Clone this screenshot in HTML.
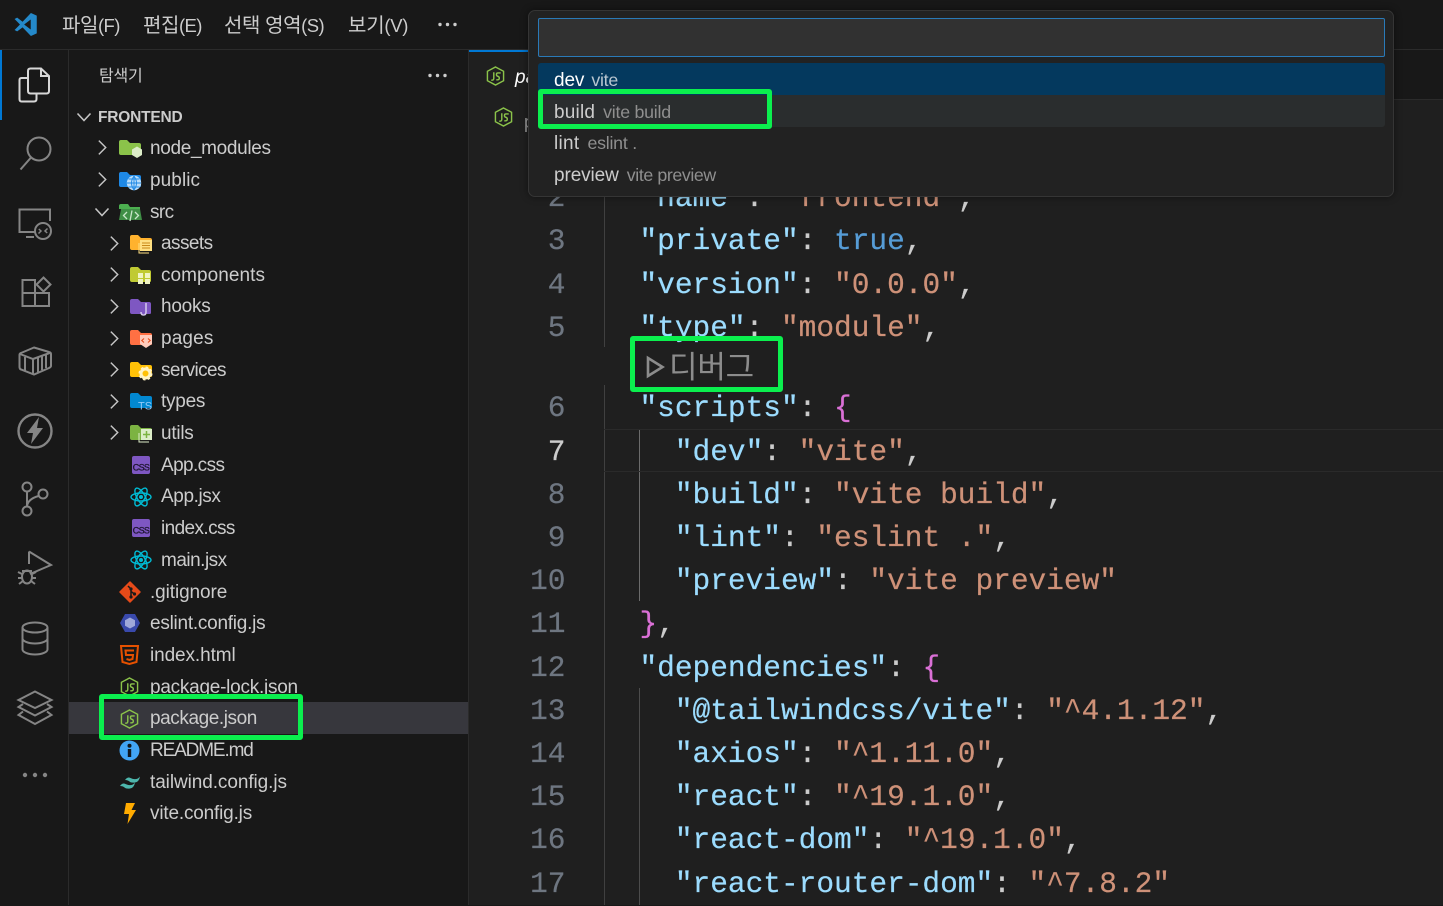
<!DOCTYPE html>
<html lang="ko"><head><meta charset="utf-8"><title>VS Code</title>
<style>
*{box-sizing:border-box}
html,body{margin:0;padding:0;background:#181818}
body{width:1443px;height:905px;position:relative;overflow:hidden;font-family:"Liberation Sans","Noto Sans CJK KR",sans-serif;color:#ccc}
.a{position:absolute}
.m{position:absolute;top:11px;height:30px;line-height:30px;font-size:20px;color:#ccc;white-space:nowrap;letter-spacing:-.4px}
.m small{font-size:18.500px;letter-spacing:-.6px}
.t{position:absolute;height:32px;line-height:30px;font-size:19px;color:#ccc;white-space:nowrap;letter-spacing:-.25px}
.c{position:absolute;height:44px;line-height:44px;font-family:"Liberation Mono",monospace;font-size:29.5px;white-space:pre;color:#ccc;letter-spacing:-.02px;-webkit-text-stroke:.2px}
.n{position:absolute;left:499.500px;width:66px;text-align:right;height:44px;line-height:44px;font-family:"Liberation Mono",monospace;font-size:29.5px;color:#6e7681;-webkit-text-stroke:.2px}
.k{color:#9cdcfe}.s{color:#ce9178}.b{color:#569cd6}.p{color:#da70d6}
.q{position:absolute;left:554px;height:32px;line-height:32px;font-size:19px;white-space:nowrap;color:#ccc;letter-spacing:-.1px}
.q i{font-style:normal;font-size:17.800px;color:#8f8f8f;margin-left:8px;letter-spacing:-.25px}
.g{position:absolute;border:5px solid #0bef4e;border-radius:3px}
svg{position:absolute;overflow:visible}
.ab{fill:none;stroke:#858585;stroke-width:2}
.ch{fill:none;stroke:#c5c5c5;stroke-width:1.6}
</style></head><body>

<svg width="0" height="0" style="position:absolute">
<defs>
<symbol id="js" viewBox="0 0 20 20" overflow="visible"><path d="M10 .5 18.500 5V15L10 19.500 1.500 15V5Z" fill="none" stroke="#8bc34a" stroke-width="1.500"/><path d="M8.200 6V12.500Q8.200 14.800 5.500 14.300M15.500 6.800H12.500Q11 6.800 11 8.400T12.500 10.300 14 12.200 12.500 14H10.800" fill="none" stroke="#8bc34a" stroke-width="1.500"/></symbol>
<symbol id="chr" viewBox="0 0 12 18" overflow="visible"><path class="ch" d="M2 1.500 9.500 9 2 16.500"/></symbol>
<symbol id="css" viewBox="0 0 20 20" overflow="visible"><rect x="1" y="1" width="18" height="18" rx="2" fill="#7e57c2"/><text x="10" y="15.500" text-anchor="middle" font-family="Liberation Sans" font-size="9" fill="#1e1530" stroke="#1e1530" stroke-width=".3" letter-spacing="-.7">CSS</text></symbol>
<symbol id="react" viewBox="0 0 22 22" overflow="visible"><g fill="none" stroke="#00bcd4" stroke-width="1.400"><ellipse cx="11" cy="11" rx="10" ry="4"/><ellipse cx="11" cy="11" rx="10" ry="4" transform="rotate(60 11 11)"/><ellipse cx="11" cy="11" rx="10" ry="4" transform="rotate(120 11 11)"/></g><circle cx="11" cy="11" r="2" fill="#00bcd4"/></symbol>
</defs>
</svg>

<!-- backgrounds -->
<div class="a" style="left:0;top:0;width:1443px;height:49px;background:#181818"></div>
<div class="a" style="left:0;top:49px;width:1443px;height:1px;background:#2b2b2b"></div>
<div class="a" style="left:0;top:50px;width:68px;height:855px;background:#181818"></div>
<div class="a" style="left:68px;top:50px;width:1px;height:855px;background:#2b2b2b"></div>
<div class="a" style="left:69px;top:50px;width:399px;height:855px;background:#181818"></div>
<div class="a" style="left:468px;top:50px;width:1px;height:855px;background:#2b2b2b"></div>
<div class="a" style="left:469px;top:50px;width:974px;height:855px;background:#1f1f1f"></div>
<div class="a" style="left:700px;top:50px;width:743px;height:49px;background:#181818"></div>
<div class="a" style="left:700px;top:99px;width:743px;height:1px;background:#2b2b2b"></div>
<div class="a" style="left:469px;top:50px;width:70px;height:2px;background:#0078d4"></div>
<div class="a" style="left:0;top:50px;width:2px;height:70px;background:#0078d4"></div>

<!-- title bar -->
<svg style="left:13px;top:12px" width="25" height="25" viewBox="0 0 24 24"><path fill="#2489ca" fill-rule="evenodd" d="M17.200 1 9.200 9.300 4 5.400 1.500 6.700 6.700 12 1.500 17.300 4 18.600 9.200 14.700 17.200 23 22.800 20.500V3.500ZM17 7.200V16.800L10.700 12Z"/></svg>
<div class="m" style="left:62px">파일<small>(F)</small></div>
<div class="m" style="left:143px">편집<small>(E)</small></div>
<div class="m" style="left:224px">선택 영역<small>(S)</small></div>
<div class="m" style="left:348px;letter-spacing:-.2px">보기<small style="letter-spacing:-.3px">(V)</small></div>
<svg style="left:438px;top:22px" width="20" height="5"><circle cx="2" cy="2.500" r="1.700" fill="#ccc"/><circle cx="9.500" cy="2.500" r="1.700" fill="#ccc"/><circle cx="17" cy="2.500" r="1.700" fill="#ccc"/></svg>

<!-- activity bar -->
<svg style="left:18px;top:67px" width="33" height="36" viewBox="0 0 33 36" fill="none" stroke="#d7d7d7" stroke-width="2"><path d="M10 4 Q10 1.500 12.500 1.500H23L31 9V24Q31 26.500 28.500 26.500H12.500Q10 26.500 10 24Z"/><path d="M23 1.500V9H31"/><path d="M10 11H3.500Q1.500 11 1.500 13V32Q1.500 34.500 3.500 34.500H16Q18.500 34.500 18.500 32V26.500"/></svg>
<svg class="ab" style="left:19px;top:136px" width="33" height="35" viewBox="0 0 33 35"><circle cx="20" cy="13" r="11.500"/><path d="M12 21.500 1.500 33.500"/></svg>
<svg class="ab" style="left:18px;top:208px" width="35" height="33" viewBox="0 0 35 33"><path d="M18 24H1.500V1.500H32V13"/><path d="M8 29H16"/><circle cx="25" cy="23" r="8"/><path d="M20.500 25.500 23 23 20.800 21M29.500 20.500 27 23 29.200 25" stroke-width="1.500"/></svg>
<svg class="ab" style="left:21px;top:276px" width="31" height="32" viewBox="0 0 31 32"><path d="M1.500 4H14V30H1.500ZM1.500 17H28V30H14"/><path d="M22.500 1.500 29.500 8.500 22.500 15.500 15.500 8.500Z"/></svg>
<svg class="ab" style="left:18px;top:346px" width="34" height="30" viewBox="0 0 34 30"><path d="M16 1.500 31 6Q33 6.500 33 8V20Q33 21 31 22L16 28.500 3 23.500Q1.500 23 1.500 21V9Q1.500 7.500 3 7Z"/><path d="M2 8 15 13 33 6.500M15 13V28M7 11V25M20 12V26M24 10.500V24M28 9V22"/></svg>
<svg class="ab" style="left:17px;top:413px" width="36" height="36" viewBox="0 0 36 36"><circle cx="18" cy="18" r="16.500" stroke-width="2.400"/><path d="M22 4 10 20H16L14 31 26 15H20Z" fill="#858585" stroke="none"/></svg>
<svg class="ab" style="left:21px;top:481px" width="28" height="36" viewBox="0 0 28 36" stroke-width="2.200"><circle cx="6" cy="6" r="4.500"/><circle cx="6" cy="30" r="4.500"/><circle cx="22" cy="13" r="4.500"/><path d="M6 10.500V25.500M6 25Q7 18 17.500 15"/></svg>
<svg class="ab" style="left:17px;top:550px" width="36" height="36" viewBox="0 0 36 36"><path d="M12 1.500 34 15 13 24"/><path d="M12 1.500V14"/><ellipse cx="10" cy="27" rx="5" ry="6.500" fill="none"/><path d="M1 22 5 24M1 28H5M2 34 6 31M19 22 15 24M19 28H15M18 34 14 31M5 21H15"/></svg>
<svg class="ab" style="left:21px;top:621px" width="28" height="35" viewBox="0 0 28 35"><ellipse cx="14" cy="6.500" rx="12.500" ry="5"/><path d="M1.500 6.500V28.500C1.500 31 7 33.500 14 33.500S26.500 31 26.500 28.500V6.500M1.500 17.500C1.500 20 7 22.500 14 22.500S26.500 20 26.500 17.500"/></svg>
<svg class="ab" style="left:17px;top:690px" width="36" height="36" viewBox="0 0 36 36"><path d="M18 1.500 34.500 10 18 18 1.500 10Z"/><path d="M6 14 1.500 17 18 25.500 34.500 17 30 14"/><path d="M6 21.500 1.500 25 18 34 34.500 25 30 21.500"/></svg>
<svg style="left:22px;top:772px" width="26" height="6"><circle cx="3" cy="3" r="2.200" fill="#858585"/><circle cx="13" cy="3" r="2.200" fill="#858585"/><circle cx="23" cy="3" r="2.200" fill="#858585"/></svg>

<!-- sidebar header -->
<div class="a" style="left:99px;top:64.500px;height:24px;line-height:24px;font-size:16px;color:#ccc;letter-spacing:-.2px">탐색기</div>
<svg style="left:428px;top:73px" width="19" height="5"><circle cx="2" cy="2.500" r="1.700" fill="#ccc"/><circle cx="9.500" cy="2.500" r="1.700" fill="#ccc"/><circle cx="17" cy="2.500" r="1.700" fill="#ccc"/></svg>
<svg style="left:76px;top:112px" width="16" height="10" viewBox="0 0 16 10"><path class="ch" d="M1.500 1.500 8 8.500 14.500 1.500"/></svg>
<div class="a" style="left:98px;top:108px;height:20px;line-height:20px;font-size:15.500px;font-weight:700;color:#ccc;letter-spacing:-.2px">FRONTEND</div>

<!-- selected row -->
<div class="a" style="left:69px;top:702px;width:399px;height:32px;background:#37373d"></div>

<!-- chevrons -->
<svg style="left:97px;top:139px" width="11" height="17"><use href="#chr"/></svg>
<svg style="left:97px;top:171px" width="11" height="17"><use href="#chr"/></svg>
<svg style="left:94px;top:207px" width="16" height="10" viewBox="0 0 16 10"><path class="ch" d="M1.500 1.500 8 8.500 14.500 1.500"/></svg>
<svg style="left:109px;top:235px" width="11" height="17"><use href="#chr"/></svg>
<svg style="left:109px;top:266px" width="11" height="17"><use href="#chr"/></svg>
<svg style="left:109px;top:298px" width="11" height="17"><use href="#chr"/></svg>
<svg style="left:109px;top:330px" width="11" height="17"><use href="#chr"/></svg>
<svg style="left:109px;top:361px" width="11" height="17"><use href="#chr"/></svg>
<svg style="left:109px;top:393px" width="11" height="17"><use href="#chr"/></svg>
<svg style="left:109px;top:424px" width="11" height="17"><use href="#chr"/></svg>

<!-- folder icons -->
<svg style="left:119px;top:139px" width="24" height="20" viewBox="0 0 24 20"><path d="M0 3Q0 1 2 1H8L11 4H20Q22 4 22 6V15Q22 16 20 16H2Q0 16 0 14Z" fill="#8bc34a"/><path d="M18 7.500 23 10.500V16L18 19 13 16V10.500Z" fill="#dcedc8"/></svg>
<svg style="left:119px;top:171px" width="24" height="20" viewBox="0 0 24 20"><path d="M0 3Q0 1 2 1H8L11 4H20Q22 4 22 6V15Q22 16 20 16H2Q0 16 0 14Z" fill="#1e88e5"/><circle cx="15" cy="12" r="7.200" fill="#bbdefb"/><path d="M8 12H22M15 5V19M9.500 8H20.500M9.500 16H20.500M15 5Q10 12 15 19Q20 12 15 5" fill="none" stroke="#1e88e5" stroke-width=".9"/></svg>
<svg style="left:119px;top:203px" width="24" height="20" viewBox="0 0 24 20"><path d="M0 3Q0 1 2 1H9L11 4H21V6H0Z" fill="#4caf50"/><path d="M2 6H21L23 17H0Z" fill="#3f8f46"/><path d="M8 9 4.500 12.500 8 16M16 9 19.500 12.500 16 16M13 7.500 11 18" fill="none" stroke="#c8e6c9" stroke-width="1.300"/></svg>
<svg style="left:130px;top:234px" width="24" height="20" viewBox="0 0 24 20"><path d="M0 3Q0 1 2 1H8L11 4H20Q22 4 22 6V15Q22 16 20 16H2Q0 16 0 14Z" fill="#ffb22e"/><rect x="10" y="6" width="12" height="11" fill="#ffe082"/><path d="M12 9H20M12 11.500H20M12 14H20" stroke="#c98a1a" stroke-width="1"/><path d="M9 9V19H19" fill="none" stroke="#ffe082" stroke-width="1"/></svg>
<svg style="left:130px;top:266px" width="24" height="20" viewBox="0 0 24 20"><path d="M0 3Q0 1 2 1H8L11 4H19Q21 4 21 6V15Q21 16 19 16H2Q0 16 0 14Z" fill="#c0ca33"/><rect x="8" y="7" width="5" height="5" fill="#f0f4c3"/><rect x="15" y="7" width="5" height="5" fill="#f0f4c3"/><rect x="8" y="13" width="5" height="5" fill="#f0f4c3"/><rect x="15" y="13" width="5" height="5" fill="#f0f4c3"/></svg>
<svg style="left:130px;top:298px" width="24" height="20" viewBox="0 0 24 20"><path d="M0 3Q0 1 2 1H8L11 4H19Q21 4 21 6V15Q21 16 19 16H2Q0 16 0 14Z" fill="#7e57c2"/><path d="M16 5V14Q16 17 13.500 17T11 14" fill="none" stroke="#d1c4e9" stroke-width="1.600"/></svg>
<svg style="left:130px;top:329px" width="24" height="20" viewBox="0 0 24 20"><path d="M0 3Q0 1 2 1H8L11 4H20Q22 4 22 6V15Q22 16 20 16H2Q0 16 0 14Z" fill="#ff7043"/><path d="M10 6H22V15L16 19 10 15Z" fill="#ffccbc"/><path d="M14 9.500 11.800 11.500 14 13.500M18 9.500 20.200 11.500 18 13.500" fill="none" stroke="#e64a19" stroke-width="1.100"/></svg>
<svg style="left:130px;top:361px" width="24" height="20" viewBox="0 0 24 20"><path d="M0 3Q0 1 2 1H8L11 4H20Q22 4 22 6V15Q22 16 20 16H2Q0 16 0 14Z" fill="#ffc107"/><circle cx="15.500" cy="12.500" r="4.500" fill="none" stroke="#fff3c4" stroke-width="3"/><circle cx="15.500" cy="12.500" r="6" fill="none" stroke="#fff3c4" stroke-width="2" stroke-dasharray="2.500 2.200"/></svg>
<svg style="left:130px;top:392px" width="24" height="20" viewBox="0 0 24 20"><path d="M0 3Q0 1 2 1H8L11 4H20Q22 4 22 6V15Q22 16 20 16H2Q0 16 0 14Z" fill="#0288d1"/><text x="15" y="17.500" text-anchor="middle" font-family="Liberation Sans" font-size="11" fill="#90caf9">TS</text></svg>
<svg style="left:130px;top:424px" width="24" height="20" viewBox="0 0 24 20"><path d="M0 3Q0 1 2 1H8L11 4H20Q22 4 22 6V15Q22 16 20 16H2Q0 16 0 14Z" fill="#7cb342"/><rect x="11" y="5" width="11" height="11" fill="#dcedc8"/><path d="M16.500 7V14M13 10.500H20" stroke="#7cb342" stroke-width="1.500"/><path d="M9 9V18H19" fill="none" stroke="#dcedc8" stroke-width="1"/></svg>

<!-- file icons -->
<svg style="left:131px;top:455px" width="20" height="20"><use href="#css"/></svg>
<svg style="left:130px;top:486px" width="22" height="22"><use href="#react"/></svg>
<svg style="left:131px;top:518px" width="20" height="20"><use href="#css"/></svg>
<svg style="left:130px;top:549px" width="22" height="22"><use href="#react"/></svg>
<svg style="left:119px;top:581px" width="22" height="22" viewBox="0 0 22 22"><path d="M11 1 21 11 11 21 1 11Z" fill="#e64a19" stroke="#e64a19" stroke-width="1.500" stroke-linejoin="round"/><path d="M9 5 12 8V16M12 10.500 15.500 13" stroke="#1a1a1a" stroke-width="1.500" fill="none"/><circle cx="12" cy="8" r="1.600" fill="#1a1a1a"/><circle cx="12" cy="16" r="1.600" fill="#1a1a1a"/><circle cx="15.500" cy="13" r="1.600" fill="#1a1a1a"/></svg>
<svg style="left:120px;top:613px" width="20" height="20" viewBox="0 0 20 20"><path d="M5 1H15L20 10 15 19H5L0 10Z" fill="#3949ab"/><path d="M10 4.500 15 7.200V12.800L10 15.500 5 12.800V7.200Z" fill="#9fa8da"/></svg>
<svg style="left:120px;top:645px" width="19" height="20" viewBox="0 0 19 20"><path d="M1 1H18L16.500 17 9.500 19 2.500 17Z" fill="none" stroke="#e65100" stroke-width="2"/><path d="M14 5.500H5.500L6 10H13L12.500 14 9.500 15 6.500 14" fill="none" stroke="#e65100" stroke-width="2"/></svg>
<svg style="left:120px;top:677px" width="19" height="20"><use href="#js"/></svg>
<svg style="left:120px;top:709px" width="19" height="20"><use href="#js"/></svg>
<svg style="left:119px;top:740px" width="21" height="21" viewBox="0 0 21 21"><circle cx="10.500" cy="10.500" r="10" fill="#42a5f5"/><rect x="8.800" y="9" width="3.400" height="8" fill="#101820"/><circle cx="10.500" cy="5.800" r="2" fill="#101820"/></svg>
<svg style="left:120px;top:776px" width="20" height="13" viewBox="0 0 20 13"><path d="M5 4Q7.500 .5 10.500 2T16 3Q18 3 20 .5 19 6 15 6.500T9.500 5.500 5 4ZM0 10Q2.500 6.500 5.500 8T11 9Q13 9 15 6.500 14 12 10 12.500T4.500 11.500 0 10Z" fill="#4db6ac"/></svg>
<svg style="left:124px;top:803px" width="12" height="21" viewBox="0 0 12 21"><path d="M2 0H11L7.500 7H12L3.500 21 5 11H0Z" fill="#ffab00"/></svg>

<!-- tree labels -->
<div class="t" style="left:150px;top:134px;letter-spacing:-.33px">node_modules</div>
<div class="t" style="left:150px;top:166px;letter-spacing:.08px">public</div>
<div class="t" style="left:150px;top:198px;letter-spacing:-.6px">src</div>
<div class="t" style="left:161px;top:229px;letter-spacing:-.55px">assets</div>
<div class="t" style="left:161px;top:261px;letter-spacing:.05px">components</div>
<div class="t" style="left:161px;top:292px">hooks</div>
<div class="t" style="left:161px;top:324px;letter-spacing:.15px">pages</div>
<div class="t" style="left:161px;top:356px;letter-spacing:-.6px">services</div>
<div class="t" style="left:161px;top:387px">types</div>
<div class="t" style="left:161px;top:419px">utils</div>
<div class="t" style="left:161px;top:451px;letter-spacing:-.6px">App.css</div>
<div class="t" style="left:161px;top:482px;letter-spacing:-.4px">App.jsx</div>
<div class="t" style="left:161px;top:514px;letter-spacing:-.6px">index.css</div>
<div class="t" style="left:161px;top:546px;letter-spacing:-.5px">main.jsx</div>
<div class="t" style="left:150px;top:578px;letter-spacing:-.1px">.gitignore</div>
<div class="t" style="left:150px;top:609px">eslint.config.js</div>
<div class="t" style="left:150px;top:641px;letter-spacing:-.1px">index.html</div>
<div class="t" style="left:150px;top:673px">package-lock.json</div>
<div class="t" style="left:150px;top:704px;letter-spacing:-.42px">package.json</div>
<div class="t" style="left:150px;top:736px;letter-spacing:-1.14px">README.md</div>
<div class="t" style="left:150px;top:768px;letter-spacing:-.08px">tailwind.config.js</div>
<div class="t" style="left:150px;top:799px;letter-spacing:-.18px">vite.config.js</div>

<!-- tab + breadcrumb icons -->
<svg style="left:486px;top:66px" width="19" height="20"><use href="#js"/></svg>
<div class="a" style="left:515px;top:65px;height:26px;line-height:26px;font-size:19px;font-style:italic;color:#fff">pa</div>
<svg style="left:494px;top:107px" width="19" height="20"><use href="#js"/></svg>
<div class="a" style="left:524px;top:109px;height:26px;line-height:26px;font-size:18px;color:#999">p</div>

<!-- editor guides -->
<div class="a" style="left:604px;top:130px;width:1px;height:217px;background:#404040"></div>
<div class="a" style="left:604px;top:385px;width:1px;height:520px;background:#404040"></div>
<div class="a" style="left:639px;top:429px;width:1px;height:172px;background:#6b6b6b"></div>
<div class="a" style="left:639px;top:688px;width:1px;height:217px;background:#4c4c4c"></div>
<div class="a" style="left:604px;top:429px;width:839px;height:43px;border-top:1px solid #2a2a2a;border-bottom:1px solid #2a2a2a"></div>

<!-- line numbers -->
<div class="n" style="top:176px">2</div>
<div class="n" style="top:219px">3</div>
<div class="n" style="top:263px">4</div>
<div class="n" style="top:306px">5</div>
<div class="n" style="top:386px">6</div>
<div class="n" style="top:430px;color:#ccc">7</div>
<div class="n" style="top:473px">8</div>
<div class="n" style="top:516px">9</div>
<div class="n" style="top:559px">10</div>
<div class="n" style="top:602px">11</div>
<div class="n" style="top:646px">12</div>
<div class="n" style="top:689px">13</div>
<div class="n" style="top:732px">14</div>
<div class="n" style="top:775px">15</div>
<div class="n" style="top:818px">16</div>
<div class="n" style="top:862px">17</div>

<!-- code -->
<div class="c" style="left:639.500px;top:176px"><span class="k">"name"</span>: <span class="s">"frontend"</span>,</div>
<div class="c" style="left:639.500px;top:219px"><span class="k">"private"</span>: <span class="b">true</span>,</div>
<div class="c" style="left:639.500px;top:263px"><span class="k">"version"</span>: <span class="s">"0.0.0"</span>,</div>
<div class="c" style="left:639.500px;top:306px"><span class="k">"type"</span>: <span class="s">"module"</span>,</div>
<div class="c" style="left:639.500px;top:386px"><span class="k">"scripts"</span>: <span class="p">{</span></div>
<div class="c" style="left:639.500px;top:430px">  <span class="k">"dev"</span>: <span class="s">"vite"</span>,</div>
<div class="c" style="left:639.500px;top:473px">  <span class="k">"build"</span>: <span class="s">"vite build"</span>,</div>
<div class="c" style="left:639.500px;top:516px">  <span class="k">"lint"</span>: <span class="s">"eslint ."</span>,</div>
<div class="c" style="left:639.500px;top:559px">  <span class="k">"preview"</span>: <span class="s">"vite preview"</span></div>
<div class="c" style="left:639.500px;top:602px"><span class="p">}</span>,</div>
<div class="c" style="left:639.500px;top:646px"><span class="k">"dependencies"</span>: <span class="p">{</span></div>
<div class="c" style="left:639.500px;top:689px">  <span class="k">"@tailwindcss/vite"</span>: <span class="s">"^4.1.12"</span>,</div>
<div class="c" style="left:639.500px;top:732px">  <span class="k">"axios"</span>: <span class="s">"^1.11.0"</span>,</div>
<div class="c" style="left:639.500px;top:775px">  <span class="k">"react"</span>: <span class="s">"^19.1.0"</span>,</div>
<div class="c" style="left:639.500px;top:818px">  <span class="k">"react-dom"</span>: <span class="s">"^19.1.0"</span>,</div>
<div class="c" style="left:639.500px;top:862px">  <span class="k">"react-router-dom"</span>: <span class="s">"^7.8.2"</span></div>

<!-- debug codelens -->
<svg style="left:646px;top:356px" width="19" height="23" viewBox="0 0 19 23"><path d="M2 2 16.500 11 2 20Z" fill="none" stroke="#8c8c8c" stroke-width="2.600"/></svg>
<div class="a" style="left:669px;top:348px;height:40px;line-height:40px;font-size:31px;color:#8c8c8c;white-space:nowrap;letter-spacing:-.2px">디버그</div>
<div class="g" style="left:630px;top:336px;width:153px;height:56px"></div>

<!-- quick pick -->
<div class="a" style="left:528px;top:10px;width:866px;height:187px;background:#222;border:1px solid #353535;border-radius:7px;box-shadow:0 0 8px rgba(0,0,0,.45)"></div>
<div class="a" style="left:538px;top:18px;width:847px;height:39px;background:#313131;border:1px solid #2a7ab8;border-radius:2px"></div>
<div class="a" style="left:538px;top:63px;width:847px;height:32px;background:#04395e;border-radius:3px 3px 0 0"></div>
<div class="a" style="left:538px;top:95px;width:847px;height:32px;background:#2a2d2e;border-radius:0 0 3px 3px"></div>
<div class="q" style="top:64px;color:#fff">dev<i style="color:#b9c6d0;margin-left:7px">vite</i></div>
<div class="q" style="top:96px;letter-spacing:.2px">build<i>vite build</i></div>
<div class="q" style="top:127px;letter-spacing:.3px">lint<i>eslint .</i></div>
<div class="q" style="top:159px">preview<i style="letter-spacing:-.4px">vite preview</i></div>
<div class="g" style="left:538px;top:89px;width:234px;height:40px"></div>

<!-- package.json highlight -->
<div class="g" style="left:99px;top:694px;width:204px;height:46px"></div>
</body></html>
